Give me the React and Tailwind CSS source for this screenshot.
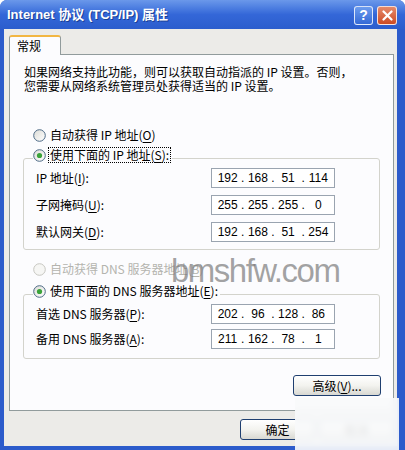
import React from 'react';

const cjk = "font-['SimSun','Noto_Sans_CJK_SC',sans-serif]";

function Radio({ checked, disabled }) {
  const ring = disabled ? '#c6c6c0' : '#4d6a86';
  return (
    <svg width="13" height="13" viewBox="0 0 13 13" className="shrink-0">
      <defs>
        <linearGradient id="rb" x1="0" y1="0" x2="1" y2="1">
          <stop offset="0" stopColor="#dcdcd6" />
          <stop offset="1" stopColor="#ffffff" />
        </linearGradient>
      </defs>
      <circle cx="6.5" cy="6.5" r="5.8" fill={disabled ? '#f6f6f4' : 'url(#rb)'} stroke={ring} strokeWidth="1" />
      {checked && <circle cx="6.5" cy="6.5" r="2.6" fill="#3aa33a" />}
    </svg>
  );
}

// 带下划线助记键的括号，例如 (O)
function Key({ k }) {
  return (
    <span>
      (<u className="underline-offset-2">{k}</u>)
    </span>
  );
}

function IpBox({ parts }) {
  return (
    <div className="w-[124px] h-[20px] border border-[#9aa4b0] bg-white flex items-center px-[3px] font-['Liberation_Sans',sans-serif] text-[12px] text-black">
      {parts.map((p, i) => (
        <React.Fragment key={i}>
          {i > 0 && <span className="w-[5px] text-center">.</span>}
          <span className="w-[26px] text-center">{p}</span>
        </React.Fragment>
      ))}
    </div>
  );
}

function Row({ label, parts }) {
  return (
    <div className="flex items-center h-[20px]">
      <div className="w-[187px] pl-[12px] whitespace-nowrap">{label}</div>
      <IpBox parts={parts} />
    </div>
  );
}

function Button({ children, className = '' }) {
  return (
    <button
      className={`h-[21px] rounded-[3px] border border-[#1f3f70] bg-gradient-to-b from-white via-[#f3f3ef] to-[#d8d8d2] text-[12px] text-black ${className}`}
    >
      {children}
    </button>
  );
}

export default function App() {
  return (
    <div className={`relative w-[405px] h-[450px] flex flex-col bg-[#2c5bcb] rounded-t-[7px] overflow-hidden ${cjk} text-[12px] text-black`}>
      {/* 标题栏 */}
      <div className="h-[29px] shrink-0 flex items-center pl-[7px] pr-[8px] bg-gradient-to-b from-[#6b98ea] via-[#3467d8] to-[#2b5dcd]">
        <span className="text-white font-bold text-[13px] font-['Liberation_Sans','Noto_Sans_CJK_SC',sans-serif] [text-shadow:1px_1px_0_#1a3f95]">
          Internet 协议 (TCP/IP) 属性
        </span>
        <div className="ml-auto mt-[2px] flex gap-[4px]">
          <div className="w-[19px] h-[19px] rounded-[3px] border border-white/80 bg-gradient-to-b from-[#6d9cee] to-[#3569d6] flex items-center justify-center text-white font-bold text-[14px] font-['Liberation_Sans',sans-serif]">
            ?
          </div>
          <div className="w-[20px] h-[19px] rounded-[3px] border border-white/80 bg-gradient-to-b from-[#e5896a] to-[#cc4a22] flex items-center justify-center">
            <svg width="11" height="11" viewBox="0 0 11 11">
              <path d="M1.5 1.5 L9.5 9.5 M9.5 1.5 L1.5 9.5" stroke="white" strokeWidth="2.2" strokeLinecap="round" />
            </svg>
          </div>
        </div>
      </div>

      {/* 窗口主体 */}
      <div className="flex-1 flex flex-col ml-[4px] mr-[8px] mb-[4px] bg-[#ecebe8] pt-[6px] pl-[5px] pr-[3px]">
        <div className="self-start relative z-10 -mb-[1px] w-[52px] h-[20px] border-x border-[#919b9c] border-t-[2px] border-t-[#f2b642] rounded-t-[3px] bg-[#fcfcfe] pl-[7px] leading-[18px]">
          常规
        </div>

        <div className="h-[357px] border border-[#919b9c] bg-[#fcfcfe] flex flex-col">
          <p className="mt-[10px] ml-[14px] leading-[14px] whitespace-nowrap">
            如果网络支持此功能，则可以获取自动指派的 IP 设置。否则，
            <br />
            您需要从网络系统管理员处获得适当的 IP 设置。
          </p>

          <div className="mt-[34px] ml-[23px] h-[16px] flex items-center gap-[4px]">
            <Radio />
            <span>自动获得 IP 地址<Key k="O" /></span>
          </div>

          <div className="mt-[15px] ml-[13px] w-[357px] border border-[#d3d3cc] rounded-[3px] flex flex-col pb-[7px]">
            <div className="-mt-[12px] ml-[9px] self-start h-[16px] flex items-center gap-[3px] pr-[2px] bg-[#fcfcfe]">
              <Radio checked />
              <span className="outline outline-1 outline-dotted outline-black px-[1px] leading-[14px]">
                使用下面的 IP 地址<Key k="S" />:
              </span>
            </div>
            <div className="mt-[5px] flex flex-col gap-[7px]">
              <Row label={<>IP 地址<Key k="I" />:</>} parts={['192', '168', '51', '114']} />
              <Row label={<>子网掩码<Key k="U" />:</>} parts={['255', '255', '255', '0']} />
              <Row label={<>默认网关<Key k="D" />:</>} parts={['192', '168', '51', '254']} />
            </div>
          </div>

          <div className="mt-[11px] ml-[23px] h-[16px] flex items-center gap-[4px] text-[#b4b4ae]">
            <Radio disabled />
            <span>自动获得 DNS 服务器地址<Key k="B" /></span>
          </div>

          <div className="mt-[17px] ml-[13px] w-[357px] border border-[#d3d3cc] rounded-[3px] flex flex-col pb-[9px]">
            <div className="-mt-[12px] ml-[9px] self-start h-[16px] flex items-center gap-[4px] pr-[2px] bg-[#fcfcfe]">
              <Radio checked />
              <span>使用下面的 DNS 服务器地址<Key k="E" />:</span>
            </div>
            <div className="mt-[5px] flex flex-col gap-[5px]">
              <Row label={<>首选 DNS 服务器<Key k="P" />:</>} parts={['202', '96', '128', '86']} />
              <Row label={<>备用 DNS 服务器<Key k="A" />:</>} parts={['211', '162', '78', '1']} />
            </div>
          </div>

          <Button className="mt-[16px] mr-[12px] self-end w-[88px]">
            高级<Key k="V" />...
          </Button>
        </div>

        <div className="mt-[8px] flex justify-end gap-[4px]">
          <Button className="w-[75px]">确定</Button>
          <Button className="w-[75px]">取消</Button>
        </div>
      </div>

      {/* 右下角遮挡块 */}
      <div className="absolute left-[295px] top-[398px] w-[104px] h-[52px] bg-[#f8f9fb]/90 backdrop-blur-[3px]" />

      {/* 水印 */}
      <div className="absolute left-[171px] top-[254px] text-[33px] tracking-[-1.5px] leading-none text-[#7a7a7a]/70 font-['Liberation_Sans',sans-serif] pointer-events-none">
        bmshfw.com
      </div>
    </div>
  );
}
